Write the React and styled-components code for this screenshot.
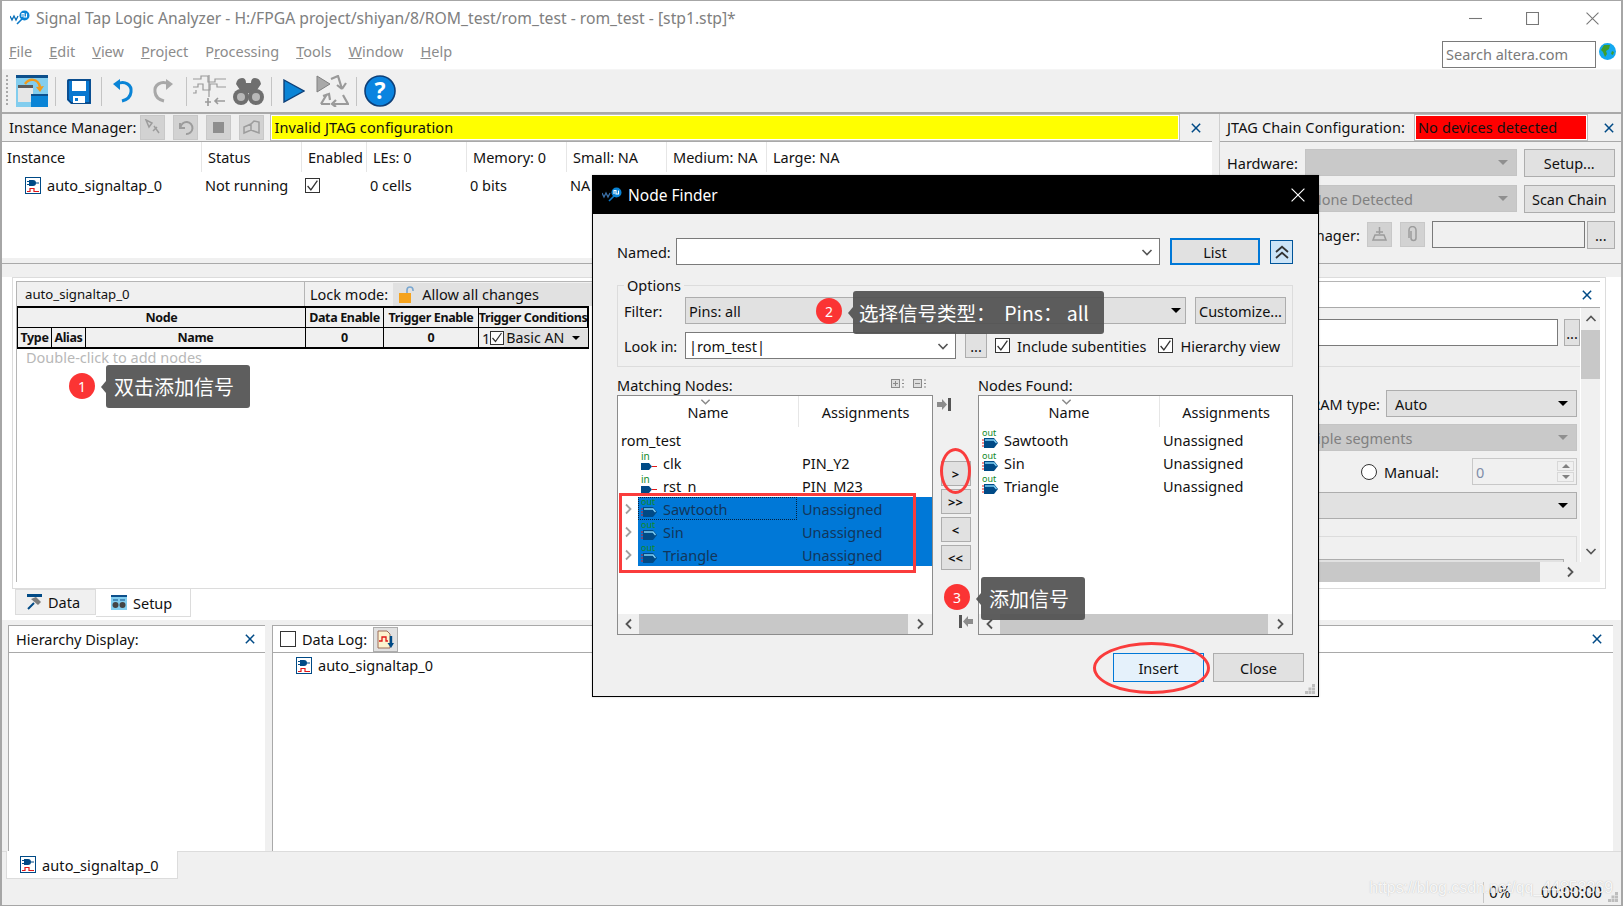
import React from 'react';
import styled, { createGlobalStyle } from 'styled-components';

const GlobalStyle = createGlobalStyle`
    html, body {
        margin: 0;
        padding: 0;
        overflow: hidden;
        background: #fff;
    }
    * { box-sizing: border-box; }
`

const Page = styled.div`
    position: relative;
    width: 1623px;
    height: 906px;
    display: flex;
    flex-direction: column;
    overflow: hidden;
    background: #f0f0f0;
    border: 1px solid #a6a6a6;
    border-width: 1px 2px 1px 2px;
    font-family: "Noto Sans", "Noto Sans CJK SC", sans-serif;
    font-size: 14.5px;
    color: #111;
`
const TitleBar = styled.div`
    height: 34px;
    flex: none;
    display: flex;
    align-items: center;
    background: #fff;
    color: #808080;
    font-size: 15.7px;
    padding-left: 8px;
    gap: 5px;
`
const WindowControls = styled.div`
    margin-left: auto;
    display: flex;
    align-items: center;
    gap: 44px;
    padding-right: 22px;
    & > svg:last-child { margin-left: 3px; }
`
const MenuBar = styled.div`
    height: 35px;
    flex: none;
    display: flex;
    align-items: center;
    background: #fff;
    border-bottom: 1px solid #f5f5f5;
    color: #8c8c8c;
    padding: 0 0 2px 7px;
    gap: 17px;
`
const SearchBox = styled.div`
    margin: 6px 0 0 auto;
    width: 154px;
    height: 27px;
    border: 1px solid #7a7a7a;
    color: #7a7a7a;
    padding-left: 3px;
    line-height: 25px;
`
const Globe = styled.div`
    width: 17px;
    height: 17px;
    margin: 0 5px 0 -14px;
    display: flex;
`
const Toolbar = styled.div`
    height: 42px;
    flex: none;
    display: flex;
    align-items: center;
    padding-left: 4px;
    background: #f0f0f0;
`
const Grip = styled.div`
    width: 2px;
    height: 32px;
    margin-right: 8px;
    background: repeating-linear-gradient(#aaa 0 2px, transparent 2px 4px);
`
const ToolSep = styled.div`
    width: 1px;
    height: 29px;
    background: #c4c4c4;
    margin: 0 ${p => p.$gap ?? 7}px;
`
const ToolIcon = styled.div`
    display: flex;
    margin: 0 ${p => p.$gap || 0}px;
`
const TopSplit = styled.div`
    height: 146px;
    flex: none;
    display: flex;
    border-top: 2px solid #a9a9a9;
`
const InstancePane = styled.div`
    width: 1210px;
    flex: none;
    display: flex;
    flex-direction: column;
`
const PaneBar = styled.div`
    height: 28px;
    flex: none;
    display: flex;
    align-items: center;
    background: #f0f0f0;
    border-bottom: 1px solid #a9a9a9;
    padding-left: 7px;
`
const BarButton = styled.div`
    width: 25px;
    height: 25px;
    margin-right: ${p => p.$after ?? 8}px;
    display: flex;
    align-items: center;
    justify-content: center;
    background: #d2d2d2;
    border: 1px solid #c8c8c8;
`
const BarLabel = styled.span`
    margin-right: 4px;
    position: relative;
    top: -1px;
`
const YellowStatus = styled.div`
    flex: 1;
    height: 25px;
    margin-left: -1px;
    padding-left: 2px;
    line-height: 22px;
    letter-spacing: 0.12px;
    background: #ffff00;
    border: 1px solid #fff;
    outline: 1px solid #bdbdbd;
`
const CloseSlot = styled.div`
    width: ${p => p.$width || 33}px;
    display: flex;
    justify-content: center;
    margin-left: auto;
`
const InstanceTable = styled.div`
    flex: 1;
    background: #fff;
    display: grid;
    grid-template-columns: 199px 100px 65px 100px 100px 100px 100px 1fr;
    grid-auto-rows: 30px 26px;
    align-content: start;
`
const InstHead = styled.div`
    display: flex;
    align-items: center;
    padding-left: ${p => p.$first ? 5 : 6}px;
    border-left: ${p => p.$first ? 'none' : '1px solid #e6e6e6'};
`
const InstCell = styled.div`
    display: flex;
    align-items: center;
    gap: 6px;
    padding-left: ${p => p.$indent ?? 4}px;
`
const Splitter = styled.div`
    width: 8px;
    flex: none;
    background: #f0f0f0;
    border-right: 1px solid #cfcfcf;
`
const JtagPane = styled.div`
    flex: 1;
    display: flex;
    flex-direction: column;
    background: #f0f0f0;
`
const JtagTitle = styled.span`
    position: relative;
    top: -1px;
    letter-spacing: 0.12px;
`
const RedStatus = styled.div`
    width: 172px;
    height: 25px;
    margin-left: 10px;
    padding-left: 2px;
    line-height: 22px;
    letter-spacing: 0.12px;
    background: #ff0000;
    border: 1px solid #fff;
    outline: 1px solid #bdbdbd;
    white-space: nowrap;
`
const JtagBody = styled.div`
    padding: 7px 11px 0 7px;
    display: flex;
    flex-direction: column;
    gap: 9px;
`
const JtagRow = styled.div`
    height: 27px;
    display: flex;
    align-items: center;
    justify-content: flex-end;
    gap: 7px;
`
const JtagLabel = styled.span`
    margin-right: auto;
    white-space: nowrap;
`
const Select = styled.div`
    width: ${p => p.$width ? `${p.$width}px` : 'auto'};
    flex: ${p => p.$width ? 'none' : 1};
    height: ${p => p.$height || 27}px;
    display: flex;
    align-items: center;
    padding: 0 ${p => p.$tight ? 4 : 8}px 0 ${p => p.$pad ?? 8}px;
    white-space: nowrap;
    overflow: hidden;
    background: ${p => p.$disabled ? '#c9c9c9' : '#e1e1e1'};
    color: ${p => p.$disabled ? '#808080' : '#111'};
    border: 1px solid ${p => p.$disabled ? '#c4c4c4' : '#adadad'};
`
const Caret = styled.span`
    margin-left: auto;
    flex: none;
    width: 0;
    height: 0;
    border-left: ${p => p.$small ? 4 : 5}px solid transparent;
    border-right: ${p => p.$small ? 4 : 5}px solid transparent;
    border-top: ${p => p.$small ? 4 : 5}px solid ${p => p.$disabled ? '#8f8f8f' : '#000'};
`
const Button = styled.div`
    width: ${p => p.$width || 91}px;
    height: ${p => p.$height || 28}px;
    flex: none;
    display: flex;
    align-items: center;
    justify-content: center;
    margin: 0 ${p => p.$right || 0}px 0 ${p => p.$left || 0}px;
    background: ${p => p.$primary ? '#e5f1fb' : '#e1e1e1'};
    border: ${p => p.$focus ? 2 : 1}px solid ${p => (p.$primary || p.$focus) ? '#0078d7' : '#adadad'};
    white-space: nowrap;
`
const Band = styled.div`
    height: 6px;
    flex: none;
    background: #f0f0f0;
    border-bottom: 1px solid #a9a9a9;
`
const MainArea = styled.div`
    height: 356px;
    flex: none;
    display: flex;
    flex-direction: column;
    background: #fff;
    padding-top: 13px;
    box-shadow: inset 0 13px 0 #f0f0f0;
`
const Frame = styled.div`
    height: 312px;
    flex: none;
    width: 1594px;
    margin-left: 10px;
    display: flex;
    padding: 3px 5px 0 3px;
    border: 1px solid #dcdcdc;
    background: #fff;
`
const NodePane = styled.div`
    width: 578px;
    flex: none;
    border-left: 1px solid #b5b5b5;
    border-top: 1px solid #b5b5b5;
    margin-bottom: 6px;
    display: flex;
    flex-direction: column;
`
const LockRow = styled.div`
    height: 24px;
    flex: none;
    display: flex;
    align-items: center;
    background: #f0f0f0;
    font-size: 14.5px;
`
const InstanceName = styled.div`
    width: 288px;
    flex: none;
    height: 100%;
    display: flex;
    align-items: center;
    padding-left: 8px;
    border-right: 1px solid #b5b5b5;
    font-size: 13.2px;
`
const LockLabel = styled.span`
    padding: 0 5px;
`
const LockSelect = styled.div`
    flex: 1;
    height: 23px;
    display: flex;
    align-items: center;
    gap: 6px;
    padding-left: 6px;
    background: #e1e1e1;
`
const NodeGrid = styled.div`
    display: grid;
    grid-template-columns: 34px 34px 220px 78px 95px 109px;
    grid-auto-rows: 20px;
    width: 572px;
    border: 1px solid #000;
    border-width: 2px 1px 1px 1px;
    background: #f0f0f0;
`
const NodeHead = styled.div`
    grid-column: span ${p => p.$span || 1};
    display: flex;
    align-items: center;
    justify-content: center;
    overflow: hidden;
    white-space: nowrap;
    font-size: 12.5px;
    font-weight: 700;
    letter-spacing: -0.35px;
    border-right: 1px solid #000;
    border-bottom: 1px solid #000;
`
const ConditionCell = styled.div`
    display: flex;
    align-items: center;
    padding-left: 3px;
    font-size: 14.5px;
    border-bottom: 1px solid #000;
`
const ConditionSelect = styled.div`
    flex: 1;
    height: 18px;
    display: flex;
    align-items: center;
    gap: 0;
    padding: 0 8px 0 2px;
    background: #e1e1e1;
    font-size: 14.2px;
`
const Hint = styled.div`
    padding: 0 0 0 9px;
    line-height: 17px;
    color: #b8b8b8;
`
const SettingsPane = styled.div`
    flex: 1;
    min-width: 0;
    display: flex;
    flex-direction: column;
    border-top: 1px solid #b5b5b5;
    margin-bottom: 6px;
`
const SettingsHead = styled.div`
    height: 26px;
    flex: none;
    display: flex;
    align-items: center;
    padding-right: 0;
    background: #fff;
    border-bottom: 1px solid #a9a9a9;
`
const SettingsBody = styled.div`
    flex: 1;
    min-height: 0;
    display: flex;
    background: #f0f0f0;
`
const SettingsForm = styled.div`
    flex: 1;
    overflow: hidden;
    padding: 11px 3px 0 0;
    display: flex;
    flex-direction: column;
    border-right: 1px solid #fff;
`
const FormRow = styled.div`
    flex: none;
    height: ${p => p.$height || 27}px;
    margin-top: ${p => p.$top || 0}px;
    margin-right: ${p => p.$right || 0}px;
    display: flex;
    align-items: center;
    justify-content: flex-end;
    gap: ${p => p.$gap || 6}px;
`
const FormInput = styled.div`
    width: ${p => p.$width || 300}px;
    height: 27px;
    margin-left: ${p => p.$left || 0}px;
    margin-right: ${p => p.$after || 0}px;
    background: ${p => p.$muted ? '#f0f0f0' : '#fff'};
    border: 1px solid #7a7a7a;
`
const Rule = styled.div`
    flex: none;
    height: 1px;
    margin: 20px -3px 0 0;
    background: #dcdcdc;
`
const Radio = styled.span`
    width: 16px;
    height: 16px;
    border: 1px solid #333;
    border-radius: 50%;
    background: #fff;
`
const Spin = styled.div`
    width: 105px;
    height: 27px;
    margin-left: 26px;
    display: flex;
    align-items: center;
    justify-content: space-between;
    padding: 0 2px 0 3px;
    color: #7f8da8;
    border: 1px solid #c8c8c8;
`
const SpinArrows = styled.div`
    display: flex;
    flex-direction: column;
    gap: 1px;
    width: 17px;
`
const SpinArrow = styled.div`
    height: 10px;
    display: flex;
    align-items: center;
    justify-content: center;
    background: #f0f0f0;
    border: 1px solid #d8d8d8;
    &::after {
        content: '';
        width: 0;
        height: 0;
        border-left: 4px solid transparent;
        border-right: 4px solid transparent;
        ${p => p.$up ? 'border-bottom: 4px solid #808080;' : 'border-top: 4px solid #808080;'}
    }
`
const GroupBox = styled.div`
    flex: none;
    height: 60px;
    margin-top: 17px;
    padding: 22px 12px 0 0;
    border: 1px solid #dcdcdc;
`
const GroupField = styled.div`
    height: 30px;
    background: #e1e1e1;
    border: 1px solid #adadad;
`
const VScroll = styled.div`
    width: 19px;
    flex: none;
    display: flex;
    flex-direction: column;
    align-items: center;
    background: #f0f0f0;
`
const VThumb = styled.div`
    width: 100%;
    height: 49px;
    background: #c8c8c8;
    margin-bottom: auto;
`
const ArrowSlot = styled.div`
    height: ${p => p.$size || 22}px;
    width: ${p => p.$size || 22}px;
    flex: none;
    display: flex;
    align-items: center;
    justify-content: center;
`
const HScrollBar = styled.div`
    height: ${p => p.$height || 20}px;
    flex: none;
    display: flex;
    align-items: center;
    background: #f0f0f0;
`
const HThumb = styled.div`
    flex: ${p => p.$grow || 1};
    height: 100%;
    background: #c8c8c8;
`
const HTrack = styled.div`
    width: ${p => p.$width}px;
    height: 100%;
    display: flex;
    align-items: center;
    justify-content: center;
    padding-left: 0;
`
const TabRow = styled.div`
    height: 28px;
    flex: none;
    display: flex;
    padding-left: 13px;
    align-items: flex-start;
`
const Tab = styled.div`
    height: ${p => p.$active ? 28 : 26}px;
    width: ${p => p.$width}px;
    display: flex;
    align-items: center;
    gap: 6px;
    padding-left: ${p => p.$pad}px;
    background: ${p => p.$active ? '#fff' : '#f0f0f0'};
    border: 1px solid #dcdcdc;
    border-top: ${p => p.$active ? 'none' : '1px solid #dcdcdc'};
    border-left: ${p => p.$active ? 'none' : '1px solid #dcdcdc'};
`
const BottomSplit = styled.div`
    flex: 1;
    min-height: 0;
    display: flex;
    padding: 5px 8px 0 6px;
    background: #f0f0f0;
`
const LogPane = styled.div`
    width: ${p => p.$width ? `${p.$width}px` : 'auto'};
    flex: ${p => p.$width ? 'none' : 1};
    margin-left: ${p => p.$gap || 0}px;
    display: flex;
    flex-direction: column;
    background: #fff;
    border-top: 1px solid #a9a9a9;
    border-left: 1px solid #a9a9a9;
`
const LogBar = styled.div`
    height: 27px;
    flex: none;
    display: flex;
    align-items: center;
    gap: 6px;
    padding-left: 7px;
    border-bottom: 1px solid #a9a9a9;
`
const Check = styled.span`
    width: ${p => p.$size || 15}px;
    height: ${p => p.$size || 15}px;
    flex: none;
    display: flex;
    align-items: center;
    justify-content: center;
    background: #fff;
    border: 1px solid #333;
`
const LogIconButton = styled.div`
    width: 25px;
    height: 25px;
    display: flex;
    align-items: center;
    justify-content: center;
    background: #e1e1e1;
    border: 1px solid #adadad;
`
const LogRow = styled.div`
    display: flex;
    align-items: center;
    gap: 6px;
    padding: 2px 0 0 23px;
`
const FootTabs = styled.div`
    height: 28px;
    flex: none;
    display: flex;
    border-top: 1px solid #dcdcdc;
    background: #f0f0f0;
`
const FootTab = styled.div`
    width: 172px;
    margin-left: 4px;
    margin-top: -1px;
    display: flex;
    align-items: center;
    gap: 6px;
    padding-left: 13px;
    background: #fff;
    border: 1px solid #dcdcdc;
    border-top: none;
    letter-spacing: 0.1px;
`
const StatusBar = styled.div`
    height: 26px;
    flex: none;
    display: flex;
    align-items: center;
    justify-content: flex-end;
    padding-right: 18px;
    background: #f0f0f0;
    font-size: 15.4px;
`
const StatusCell = styled.span`
    width: ${p => p.$width}px;
    padding-left: ${p => p.$pad || 0}px;
    border-left: ${p => p.$line ? '1px solid #c8c8c8' : 'none'};
`
const Watermark = styled.div`
    position: absolute;
    right: 8px;
    bottom: 8px;
    font-family: "Liberation Sans", sans-serif;
    font-size: 15.9px;
    color: rgba(255, 255, 255, 0.9);
    text-shadow: 0 0 1px rgba(120, 120, 120, 0.5);
    white-space: nowrap;
`
const Grabber = styled.div`
    position: absolute;
    right: ${p => p.$right}px;
    bottom: ${p => p.$bottom}px;
    display: flex;
`

/* Node Finder dialog */
const Dialog = styled.div`
    position: absolute;
    left: 590px;
    top: 174px;
    width: 727px;
    height: 522px;
    display: flex;
    flex-direction: column;
    background: #f0f0f0;
    border: 1px solid #000;
    box-shadow: 0 0 2px rgba(0, 0, 0, 0.2);
`
const DialogTitle = styled.div`
    height: 38px;
    flex: none;
    display: flex;
    align-items: center;
    gap: 5px;
    padding: 0 13px 0 9px;
    background: #000;
    color: #fff;
    font-size: 15.5px;
`
const DialogClose = styled.div`
    margin-left: auto;
    display: flex;
`
const DialogBody = styled.div`
    flex: 1;
    padding: 24px 25px 0 24px;
    display: flex;
    flex-direction: column;
`
const NamedRow = styled.div`
    height: 27px;
    flex: none;
    display: flex;
    align-items: center;
`
const DialogLabel = styled.span`
    width: ${p => p.$width}px;
    flex: none;
`
const ComboInput = styled.div`
    width: ${p => p.$width}px;
    height: 27px;
    flex: none;
    display: flex;
    align-items: center;
    padding: 0 6px 0 ${p => p.$pad ?? 5}px;
    background: #fff;
    border: 1px solid #7a7a7a;
`
const EndMark = styled.span`
    margin-left: auto;
    display: flex;
`
const Collapse = styled.div`
    width: 24px;
    height: 24px;
    margin-left: 10px;
    display: flex;
    align-items: center;
    justify-content: center;
    background: #cce4f7;
    border: 1px solid #005499;
`
const Options = styled.fieldset`
    margin: 10px 0 0;
    height: 92px;
    padding: 0 6px;
    border: 1px solid #dcdcdc;
    flex: none;
    display: flex;
    flex-direction: column;
    gap: 8px;
    min-width: 0;
`
const Legend = styled.legend`
    margin-left: 0;
    padding: 0 3px;
    line-height: 20px;
`
const OptionRow = styled.div`
    height: 27px;
    flex: none;
    display: flex;
    align-items: center;
    gap: ${p => p.$gap || 0}px;
    margin-top: ${p => p.$top || 0}px;
`
const CheckLabel = styled.label`
    display: flex;
    align-items: center;
    gap: 7px;
    white-space: nowrap;
    margin-left: ${p => p.$left || 0}px;
`
const NodeColumns = styled.div`
    margin-top: 7px;
    display: grid;
    grid-template-columns: 316px 45px 315px;
`
const NodesHead = styled.div`
    height: 21px;
    display: flex;
    align-items: center;
    gap: 7px;
`
const NodesHeadIcons = styled.div`
    margin: 0 7px 0 auto;
    display: flex;
    gap: 9px;
`
const NodesBox = styled.div`
    height: 240px;
    display: flex;
    flex-direction: column;
    background: #fff;
    border: 1px solid #8c8c8c;
`
const BoxHead = styled.div`
    height: 31px;
    flex: none;
    display: grid;
    grid-template-columns: ${p => p.$nameWidth}px 1fr;
    position: relative;
`
const BoxHeadCell = styled.div`
    display: flex;
    align-items: center;
    justify-content: center;
    border-left: ${p => p.$line ? '1px solid #e6e6e6' : 'none'};
`
const SortMark = styled.div`
    position: absolute;
    top: 0;
    left: ${p => p.$left}px;
    display: flex;
`
const TreeList = styled.div`
    flex: 1;
    min-height: 0;
    padding-top: 1px;
`
const TreeRow = styled.div`
    height: 23px;
    display: flex;
    align-items: center;
    color: ${p => p.$selected ? '#12365c' : '#111'};
`
const Expander = styled.div`
    width: 20px;
    flex: none;
    display: flex;
    justify-content: center;
`
const RowBody = styled.div`
    flex: 1;
    height: 100%;
    display: grid;
    grid-template-columns: ${p => p.$nameWidth}px 1fr;
    grid-template-rows: 23px;
    background: ${p => p.$selected ? '#0078d7' : 'transparent'};
`
const NameCell = styled.div`
    display: flex;
    align-items: center;
    padding-left: ${p => p.$pad || 3}px;
    gap: 3px;
    outline: ${p => p.$focus ? '1px dotted #06213d' : 'none'};
    outline-offset: -1px;
`
const AssignCell = styled.div`
    display: flex;
    align-items: center;
    padding-left: 5px;
`
const MoveButtons = styled.div`
    display: flex;
    flex-direction: column;
    align-items: center;
    position: relative;
    padding-top: 87px;
    gap: 3px;
    height: 261px;
`
const MoveButton = styled.div`
    width: 30px;
    height: 25px;
    display: flex;
    align-items: center;
    justify-content: center;
    background: #e1e1e1;
    border: 1px solid #adadad;
    font-weight: 700;
    font-size: 13px;
`
const MoveIcon = styled.div`
    position: absolute;
    left: ${p => p.$left}px;
    top: ${p => p.$top}px;
    display: flex;
`
const DialogFoot = styled.div`
    margin-top: 18px;
    display: flex;
    justify-content: flex-end;
    gap: 9px;
    margin-right: -11px;
`

/* red marks and grey notes someone drew on top of the screenshot */
const RedBox = styled.div`
    position: absolute;
    left: ${p => p.$left}px;
    top: ${p => p.$top}px;
    width: ${p => p.$width}px;
    height: ${p => p.$height}px;
    border: 3px solid #fa3c3c;
    border-radius: ${p => p.$round ? '50%' : '0'};
    pointer-events: none;
`
const Note = styled.div`
    position: absolute;
    left: ${p => p.$left}px;
    top: ${p => p.$top}px;
    height: ${p => p.$height}px;
    width: ${p => p.$width}px;
    padding-left: ${p => p.$pad ?? 8}px;
    display: flex;
    align-items: center;
    white-space: pre;
    border-radius: 3px;
    background: rgba(82, 82, 82, 0.93);
    color: #fff;
    font-family: "Noto Sans CJK SC", "Noto Sans", sans-serif;
    font-size: ${p => p.$size || 20}px;
    &::before {
        content: '';
        position: absolute;
        left: -5px;
        top: 50%;
        margin-top: -6px;
        border-top: 6px solid transparent;
        border-bottom: 6px solid transparent;
        border-right: 5px solid rgba(82, 82, 82, 0.93);
    }
`
const NoteDot = styled.div`
    position: absolute;
    left: ${p => p.$left}px;
    top: ${p => p.$top}px;
    width: 26px;
    height: 26px;
    display: flex;
    align-items: center;
    justify-content: center;
    border-radius: 50%;
    background: #fb3434;
    color: #fff;
    font-size: 14px;
`

const Stroke = ({ size = 12, color = '#555', width = 1.6, d }) => (
    <svg width={size} height={size} viewBox="0 0 12 12" fill="none" stroke={color} strokeWidth={width}>
        <path d={d} />
    </svg>
)
const CloseX = ({ color = '#004a86' }) => <Stroke size={10} color={color} width={1.8} d="M1 1 L11 11 M11 1 L1 11" />
const ChevronLeft = () => <Stroke d="M8 1.5 L3.5 6 L8 10.5" width={1.8} />
const ChevronRight = ({ color }) => <Stroke color={color} d="M4 1.5 L8.5 6 L4 10.5" width={1.8} />
const ChevronUp = () => <Stroke d="M1.5 8 L6 3.5 L10.5 8" width={1.6} />
const ChevronDown = ({ size = 12, color = '#555' }) => <Stroke size={size} color={color} d="M1.5 4 L6 8.5 L10.5 4" width={1.6} />
const Tick = () => <Stroke size={13} color="#333" width={1.2} d="M1.5 6.5 L4.5 10 L10.5 1.5" />

const WaveLogo = ({ light }) => (
    <svg width="21" height="16" viewBox="0 0 21 16" fill="none">
        <path d="M0 6 L2 10 L4 6 L6 10 L8 6" stroke={light ? '#0a6fb8' : '#3a6ea5'} strokeWidth="1.3" />
        <path d="M7 14 L14 7" stroke="#0a78c8" strokeWidth="1.6" />
        <circle cx="14.5" cy="5.5" r="5" fill="#0a84d6" />
        <path d="M12 7 V3.5 H14 V7 H16.5 V3.5" stroke="#fff" strokeWidth="1.1" />
    </svg>
)
const InstanceIcon = () => (
    <svg width="16" height="17" viewBox="0 0 16 17" fill="none">
        <rect x="0.5" y="0.5" width="15" height="16" fill="#fff" stroke="#004a86" />
        <path d="M4 3 H8 A3 3 0 0 1 8 9 H4 Z" fill="#004a86" />
        <path d="M2 4.5 H4 M2 7.5 H4 M11 6 H14" stroke="#004a86" />
        <path d="M2 14.5 H5 V11.5 H9 V14.5 H14" stroke="#e01818" strokeWidth="1.2" />
    </svg>
)
const AppIcon = () => (
    <svg width="32" height="32" viewBox="0 0 32 32">
        <rect width="32" height="32" fill="#82cdee" />
        <rect width="32" height="3" fill="#0d4f8b" />
        <rect x="2" y="10" width="15" height="17" fill="#e6e6e6" />
        <rect x="2" y="10" width="15" height="3" fill="#5a5a5a" />
        <rect x="15" y="19" width="17" height="13" fill="#0a84d6" />
        <rect x="15" y="19" width="17" height="2" fill="#0d4f8b" />
        <path d="M9 9 C13 3 22 3 24 12" stroke="#f09a1a" strokeWidth="2.4" fill="none" />
        <path d="M20 12 L28 11 L24 17 Z" fill="#f09a1a" />
    </svg>
)
const SaveIcon = () => (
    <svg width="24" height="25" viewBox="0 0 24 25">
        <path d="M0 2 Q0 0 2 0 H24 V25 H4 L0 21 Z" fill="#0a78d0" />
        <path d="M1 2 Q1 1 2 1 H23 V24 H4.5 L1 20.5 Z" fill="none" stroke="#0d3f78" strokeWidth="1.4" />
        <rect x="5" y="2" width="14" height="10" fill="#fff" />
        <rect x="6" y="17" width="12" height="7" fill="#fff" />
        <rect x="8" y="19" width="3" height="3" fill="#0a78d0" />
    </svg>
)
const UndoIcon = ({ color, flip }) => (
    <svg width="21" height="24" viewBox="0 0 21 24" fill="none" style={flip ? { transform: 'scaleX(-1)' } : undefined}>
        <path d="M4 5 C12 1 19 6 18 13 C17.5 18 13 21 9 22" stroke={color} strokeWidth="3" />
        <path d="M7 0 L0 5 L7 11 Z" fill={color} />
    </svg>
)
const WaveToolIcon = () => (
    <svg width="33" height="32" viewBox="0 0 33 32" fill="none" stroke="#9a9a9a" strokeWidth="1.2">
        <path d="M0 4 H8 V1 H15 V7 H22 V4 H33" />
        <path d="M0 12 H5 V9 H10 V15 H17 V9 H24 V12 H33" />
        <path d="M0 18 H3 V15 M16 0 V22" />
        <path d="M15 23 V31 M12 27 H18 M32 26 H22 M25 23 L22 26 L25 29" strokeWidth="1.6" />
    </svg>
)
const BinocularsIcon = () => (
    <svg width="31" height="30" viewBox="0 0 31 30">
        <path d="M3 8 Q4 2 9 2 Q13 2 13 7 H18 Q18 2 22 2 Q27 2 28 8 L24 14 H7 Z" fill="#6f6f6f" />
        <rect x="12" y="9" width="7" height="8" fill="#6f6f6f" />
        <circle cx="8" cy="21" r="8" fill="#6f6f6f" />
        <circle cx="23" cy="21" r="8" fill="#6f6f6f" />
        <circle cx="8" cy="21" r="4" fill="#b8b8b8" />
        <circle cx="23" cy="21" r="4" fill="#b8b8b8" />
    </svg>
)
const PlayIcon = () => (
    <svg width="22" height="24" viewBox="0 0 22 24">
        <path d="M1 1 L21 12 L1 23 Z" fill="#0a84d6" stroke="#0d3f78" strokeWidth="1.4" />
    </svg>
)
const AutoRunIcon = () => (
    <svg width="33" height="32" viewBox="0 0 33 32" fill="none">
        <path d="M1 1 L14 9 L1 17 Z" fill="#a8a8a8" stroke="#808080" />
        <path d="M15 4 L22 1 L26 14 M26 14 L30 8 M26 14 L21 10" stroke="#9a9a9a" strokeWidth="2.2" />
        <path d="M5 29 L11 19 M7 21 L13 19 L14 25 M5 29 H14" stroke="#9a9a9a" strokeWidth="2.2" />
        <path d="M18 29 H32 L27 20 M20 25 L16 29 L20 32" stroke="#9a9a9a" strokeWidth="2.2" />
    </svg>
)
const HelpIcon = () => (
    <svg width="32" height="32" viewBox="0 0 32 32">
        <circle cx="16" cy="16" r="15" fill="#0a84e0" stroke="#0d3f78" strokeWidth="1.6" />
        <text x="16" y="24" textAnchor="middle" fontSize="23" fontWeight="700" fontFamily="Noto Sans, sans-serif" fill="#fff">?</text>
    </svg>
)
const GlobeIcon = () => (
    <svg width="17" height="17" viewBox="0 0 17 17">
        <circle cx="8.5" cy="8.5" r="8.5" fill="#14a8f0" />
        <path d="M5 2 L11 2 L10 6 L7 8 L8 11 L6 14 L4 9 L2 7 Z" fill="#3f9e2c" />
        <path d="M13 8 L15 9 L14 12 L12 11 Z" fill="#3f9e2c" />
    </svg>
)
const ManagerGlyph = ({ kind }) => (
    <svg width="17" height="17" viewBox="0 0 17 17" fill="none" stroke="#9c9c9c" strokeWidth="1.5">
        {kind === 'wand' && <path d="M2 1 L8 4 L5 8 Z M10 7 L15 14 M9 12 L13 8" />}
        {kind === 'reset' && <path d="M3 4 V9 H8 M3.5 8.5 A6 6 0 1 1 9 15" strokeWidth="2" />}
        {kind === 'stop' && <rect x="3" y="3" width="11" height="11" fill="#8e8e8e" stroke="none" />}
        {kind === 'book' && <path d="M1 14 L8 11 L16 14 V3 L11 2 L8 5 L1 8 Z M8 5 V11" />}
        {kind === 'program' && <path d="M8.5 1 V8 M5 6 H12 M4 9 H13 L15 14 H2 Z" />}
        {kind === 'clip' && <path d="M6 5 V12 A2.5 2.5 0 0 0 11 12 V4 A3.5 3.5 0 0 0 4 4 V12" transform="translate(1)" />}
    </svg>
)
const LockIcon = () => (
    <svg width="17" height="17" viewBox="0 0 17 17" fill="none">
        <path d="M8 7 V4 A3 3 0 0 1 14 4 V5" stroke="#7aa7d0" strokeWidth="1.6" />
        <rect x="0" y="7" width="12" height="10" fill="#f5a31e" />
    </svg>
)
const HammerIcon = () => (
    <svg width="15" height="16" viewBox="0 0 15 16" fill="none">
        <rect width="15" height="3" fill="#004a86" />
        <rect y="3" width="15" height="8" fill="#eee" />
        <path d="M1 15 L7 9" stroke="#004a86" strokeWidth="2" />
        <path d="M4 5 L9 3 L14 8 L11 11 Z" fill="#7c7c7c" />
    </svg>
)
const SetupIcon = () => (
    <svg width="16" height="15" viewBox="0 0 16 15">
        <rect width="16" height="15" fill="#82cdee" />
        <rect width="16" height="2" fill="#0d4f8b" />
        <circle cx="4.5" cy="10" r="3" fill="#444" />
        <circle cx="11.5" cy="10" r="3" fill="#444" />
        <path d="M2 5 H7 M9 5 H14" stroke="#0d4f8b" />
    </svg>
)
const LogIcon = () => (
    <svg width="17" height="19" viewBox="0 0 17 19" fill="none">
        <path d="M1 1 H10 L13 4 V18 H1 Z" fill="#fdf3cf" stroke="#9c6c58" />
        <path d="M2 11 H5 V7 H9 V11 H11" stroke="#e01818" strokeWidth="1.3" />
        <path d="M14 6 V15" stroke="#004a86" strokeWidth="2.4" />
        <path d="M10.5 13 H17 L14 18 Z" fill="#004a86" />
    </svg>
)
const PinBox = styled.svg`
    width: 19px;
    height: 29px;
    margin: -3px 0;
    flex: none;
`
const PinIcon = ({ dir }) => dir === 'in' ? (
    <PinBox viewBox="0 0 19 29" fill="none">
        <text x="0" y="12" fontSize="10" fontFamily="Noto Sans, sans-serif" fill="#128a2a">in</text>
        <path d="M0 15 H8 L11 18.5 L8 22 H0 Z" fill="#004a86" />
        <path d="M11 18.5 H16" stroke="#e01818" />
    </PinBox>
) : (
    <PinBox viewBox="0 0 19 29" fill="none">
        <text x="0" y="11" fontSize="9" fontFamily="Noto Sans, sans-serif" fill="#128a2a">out</text>
        <path d="M2 13 H12 L16 18 L12 23 H2 Z" fill="#004a86" />
        <path d="M3 15 H12 L14.5 18" stroke="#7fd0f5" strokeWidth="1.3" />
        <path d="M0 15 H2 M0 18 H2 M0 21 H2" stroke="#e01818" />
    </PinBox>
)
const HierarchyIcon = ({ plus }) => (
    <svg width="13" height="11" viewBox="0 0 13 11" fill="none" stroke="#8a8a8a">
        <rect x="0.5" y="0.5" width="8" height="8" fill="#ddd" />
        <path d={plus ? 'M2 4.5 H7 M4.5 2 V7' : 'M2 4.5 H7'} />
        <path d="M11 1 H13 M11 4.5 H13 M11 8 H13" />
    </svg>
)
const ToEndIcon = ({ flip }) => (
    <svg width="14" height="13" viewBox="0 0 14 13" style={flip ? { transform: 'scaleX(-1)' } : undefined}>
        <path d="M0 4 H5 V1 L10 6.5 L5 12 V9 H0 Z" fill="#8c8c8c" />
        <rect x="11" y="0" width="3" height="13" fill="#555" />
    </svg>
)
const Grip3 = () => (
    <svg width="10" height="10" viewBox="0 0 10 10" fill="#bdbdbd">
        <rect x="7" y="0" width="3" height="3" />
        <rect x="3.5" y="3.5" width="3" height="3" />
        <rect x="7" y="3.5" width="3" height="3" />
        <rect x="0" y="7" width="3" height="3" />
        <rect x="3.5" y="7" width="3" height="3" />
        <rect x="7" y="7" width="3" height="3" />
    </svg>
)

const matching = [
    { name: 'Sawtooth', focus: true },
    { name: 'Sin' },
    { name: 'Triangle' },
]

const Scrollbar = ({ width }) => (
    <HScrollBar>
        <ArrowSlot $size={21}><ChevronLeft /></ArrowSlot>
        <HThumb />
        <ArrowSlot $size={width}><ChevronRight /></ArrowSlot>
    </HScrollBar>
)

const NodeFinder = () => (
    <Dialog>
        <DialogTitle>
            <WaveLogo />
            Node Finder
            <DialogClose><Stroke size={14} color="#fff" width={1} d="M0.5 0.5 L11.5 11.5 M11.5 0.5 L0.5 11.5" /></DialogClose>
        </DialogTitle>
        <DialogBody>
            <NamedRow>
                <DialogLabel $width={59}>Named:</DialogLabel>
                <ComboInput $width={484}><EndMark><ChevronDown /></EndMark></ComboInput>
                <Button $focus $height={27} $width={90} $left={10}>List</Button>
                <Collapse><Stroke size={18} color="#333" width={1.2} d="M2 6 L6 2.5 L10 6 M2 10 L6 6.5 L10 10" /></Collapse>
            </NamedRow>
            <Options>
                <Legend>Options</Legend>
                <OptionRow $top={2}>
                    <DialogLabel $width={61}>Filter:</DialogLabel>
                    <Select $tight $pad={3} $width={501}>Pins: all<Caret /></Select>
                    <Button $width={91} $height={27} $left={9}>Customize...</Button>
                </OptionRow>
                <OptionRow>
                    <DialogLabel $width={61}>Look in:</DialogLabel>
                    <ComboInput $width={271} $pad={3}>|rom_test|<EndMark><ChevronDown /></EndMark></ComboInput>
                    <Button $width={22} $height={25} $left={9} $right={8}>...</Button>
                    <CheckLabel><Check><Tick /></Check>Include subentities</CheckLabel>
                    <CheckLabel $left={12}><Check><Tick /></Check>Hierarchy view</CheckLabel>
                </OptionRow>
            </Options>
            <NodeColumns>
                <div>
                    <NodesHead>
                        Matching Nodes:
                        <NodesHeadIcons><HierarchyIcon plus /><HierarchyIcon /></NodesHeadIcons>
                    </NodesHead>
                    <NodesBox>
                        <BoxHead $nameWidth={180}>
                            <SortMark $left={82}><ChevronDown size={11} color="#888" /></SortMark>
                            <BoxHeadCell>Name</BoxHeadCell>
                            <BoxHeadCell $line>Assignments</BoxHeadCell>
                        </BoxHead>
                        <TreeList>
                            <TreeRow><RowBody $nameWidth={179}><NameCell>rom_test</NameCell></RowBody></TreeRow>
                            <TreeRow><RowBody $nameWidth={179}><NameCell $pad={23}><PinIcon dir="in" />clk</NameCell><AssignCell>PIN_Y2</AssignCell></RowBody></TreeRow>
                            <TreeRow><RowBody $nameWidth={179}><NameCell $pad={23}><PinIcon dir="in" />rst_n</NameCell><AssignCell>PIN_M23</AssignCell></RowBody></TreeRow>
                            {matching.map(row => (
                                <TreeRow $selected key={row.name}>
                                    <Expander><ChevronRight color="#a0a0a0" /></Expander>
                                    <RowBody $selected $nameWidth={159}>
                                        <NameCell $pad={3} $focus={row.focus}><PinIcon />{row.name}</NameCell>
                                        <AssignCell>Unassigned</AssignCell>
                                    </RowBody>
                                </TreeRow>
                            ))}
                        </TreeList>
                        <Scrollbar width={24} />
                    </NodesBox>
                </div>
                <MoveButtons>
                    <MoveIcon $left={4} $top={24}><ToEndIcon /></MoveIcon>
                    <MoveButton>&gt;</MoveButton>
                    <MoveButton>&gt;&gt;</MoveButton>
                    <MoveButton>&lt;</MoveButton>
                    <MoveButton>&lt;&lt;</MoveButton>
                    <MoveIcon $left={26} $top={241}><ToEndIcon flip /></MoveIcon>
                </MoveButtons>
                <div>
                    <NodesHead>Nodes Found:</NodesHead>
                    <NodesBox>
                        <BoxHead $nameWidth={180}>
                            <SortMark $left={82}><ChevronDown size={11} color="#888" /></SortMark>
                            <BoxHeadCell>Name</BoxHeadCell>
                            <BoxHeadCell $line>Assignments</BoxHeadCell>
                        </BoxHead>
                        <TreeList>
                            {matching.map(row => (
                                <TreeRow key={row.name}>
                                    <RowBody $nameWidth={179}>
                                        <NameCell $pad={3}><PinIcon />{row.name}</NameCell>
                                        <AssignCell>Unassigned</AssignCell>
                                    </RowBody>
                                </TreeRow>
                            ))}
                        </TreeList>
                        <Scrollbar width={24} />
                    </NodesBox>
                </div>
            </NodeColumns>
            <DialogFoot>
                <Button $primary $width={91} $height={29}>Insert</Button>
                <Button $width={91} $height={29}>Close</Button>
            </DialogFoot>
        </DialogBody>
        <Grabber $right={3} $bottom={2}><Grip3 /></Grabber>

        <RedBox $left={26} $top={317} $width={297} $height={80} />
        <RedBox $round $left={347} $top={272} $width={31} $height={46} />
        <RedBox $round $left={500} $top={466} $width={117} $height={52} />

        <NoteDot $left={223} $top={122}>2</NoteDot>
        <Note $left={260} $top={115} $width={251} $height={43} $size={19.5} $pad={6}>选择信号类型：  Pins： all</Note>
        <NoteDot $left={351} $top={408}>3</NoteDot>
        <Note $left={388} $top={401} $width={104} $height={43}>添加信号</Note>
    </Dialog>
)

const App = () => (
    <Page>
        <GlobalStyle />
        <TitleBar>
            <WaveLogo light />
            Signal Tap Logic Analyzer - H:/FPGA project/shiyan/8/ROM_test/rom_test - rom_test - [stp1.stp]*
            <WindowControls>
                <Stroke size={13} color="#777" width={1} d="M0 6 H12" />
                <Stroke size={13} color="#777" width={1} d="M0.5 0.5 H11.5 V11.5 H0.5 Z" />
                <Stroke size={13} color="#777" width={1} d="M0.5 0.5 L11.5 11.5 M11.5 0.5 L0.5 11.5" />
            </WindowControls>
        </TitleBar>
        <MenuBar>
            <span><u>F</u>ile</span>
            <span><u>E</u>dit</span>
            <span><u>V</u>iew</span>
            <span><u>P</u>roject</span>
            <span>P<u>r</u>ocessing</span>
            <span><u>T</u>ools</span>
            <span><u>W</u>indow</span>
            <span><u>H</u>elp</span>
            <SearchBox>Search altera.com</SearchBox>
            <Globe><GlobeIcon /></Globe>
        </MenuBar>
        <Toolbar>
            <Grip />
            <ToolIcon><AppIcon /></ToolIcon>
            <ToolSep />
            <ToolIcon $gap={4}><SaveIcon /></ToolIcon>
            <ToolSep $gap={6} />
            <ToolIcon $gap={5}><UndoIcon color="#0a84d6" /></ToolIcon>
            <ToolIcon $gap={13}><UndoIcon color="#a8a8a8" flip /></ToolIcon>
            <ToolSep $gap={0} />
            <ToolIcon $gap={6}><WaveToolIcon /></ToolIcon>
            <ToolIcon $gap={1}><BinocularsIcon /></ToolIcon>
            <ToolSep $gap={6} />
            <ToolIcon $gap={5}><PlayIcon /></ToolIcon>
            <ToolIcon $gap={6}><AutoRunIcon /></ToolIcon>
            <ToolSep $gap={1} />
            <ToolIcon $gap={6}><HelpIcon /></ToolIcon>
        </Toolbar>

        <TopSplit>
            <InstancePane>
                <PaneBar>
                    <BarLabel>Instance Manager:</BarLabel>
                    <BarButton><ManagerGlyph kind="wand" /></BarButton>
                    <BarButton><ManagerGlyph kind="reset" /></BarButton>
                    <BarButton><ManagerGlyph kind="stop" /></BarButton>
                    <BarButton><ManagerGlyph kind="book" /></BarButton>
                    <YellowStatus>Invalid JTAG configuration</YellowStatus>
                    <CloseSlot><CloseX /></CloseSlot>
                </PaneBar>
                <InstanceTable>
                    <InstHead $first>Instance</InstHead>
                    <InstHead>Status</InstHead>
                    <InstHead>Enabled</InstHead>
                    <InstHead>LEs: 0</InstHead>
                    <InstHead>Memory: 0</InstHead>
                    <InstHead>Small: NA</InstHead>
                    <InstHead>Medium: NA</InstHead>
                    <InstHead>Large: NA</InstHead>
                    <InstCell $indent={23}><InstanceIcon />auto_signaltap_0</InstCell>
                    <InstCell>Not running</InstCell>
                    <InstCell><Check><Tick /></Check></InstCell>
                    <InstCell>0 cells</InstCell>
                    <InstCell>0 bits</InstCell>
                    <InstCell>NA</InstCell>
                </InstanceTable>
            </InstancePane>
            <Splitter />
            <JtagPane>
                <PaneBar>
                    <JtagTitle>JTAG Chain Configuration:</JtagTitle>
                    <RedStatus>No devices detected</RedStatus>
                    <CloseSlot $width={34}><CloseX /></CloseSlot>
                </PaneBar>
                <JtagBody>
                    <JtagRow>
                        <JtagLabel>Hardware:</JtagLabel>
                        <Select $disabled $width={212}><Caret $disabled /></Select>
                        <Button>Setup...</Button>
                    </JtagRow>
                    <JtagRow>
                        <JtagLabel>Device:</JtagLabel>
                        <Select $disabled $width={212} $pad={5}>None Detected<Caret $disabled /></Select>
                        <Button>Scan Chain</Button>
                    </JtagRow>
                    <JtagRow>
                        <span>SOF Manager:</span>
                        <BarButton $after={1}><ManagerGlyph kind="program" /></BarButton>
                        <BarButton $after={0}><ManagerGlyph kind="clip" /></BarButton>
                        <FormInput $muted $width={153} $after={-5} />
                        <Button $width={28}>...</Button>
                    </JtagRow>
                </JtagBody>
            </JtagPane>
        </TopSplit>

        <Band />
        <MainArea>
            <Frame>
                <NodePane>
                    <LockRow>
                        <InstanceName>auto_signaltap_0</InstanceName>
                        <LockLabel>Lock mode:</LockLabel>
                        <LockSelect><LockIcon />Allow all changes</LockSelect>
                    </LockRow>
                    <NodeGrid>
                        <NodeHead $span={3}>Node</NodeHead>
                        <NodeHead>Data Enable</NodeHead>
                        <NodeHead>Trigger Enable</NodeHead>
                        <NodeHead>Trigger Conditions</NodeHead>
                        <NodeHead>Type</NodeHead>
                        <NodeHead>Alias</NodeHead>
                        <NodeHead>Name</NodeHead>
                        <NodeHead>0</NodeHead>
                        <NodeHead>0</NodeHead>
                        <ConditionCell>1<Check $size={14}><Tick /></Check><ConditionSelect>Basic AN<Caret $small /></ConditionSelect></ConditionCell>
                    </NodeGrid>
                    <Hint>Double-click to add nodes</Hint>
                </NodePane>
                <SettingsPane>
                    <SettingsHead><CloseSlot $width={26}><CloseX /></CloseSlot></SettingsHead>
                    <SettingsBody>
                        <SettingsForm>
                            <FormRow $right={-3} $gap={4}>
                                <FormInput $after={2} />
                                <Button $width={16} $height={27}>...</Button>
                            </FormRow>
                            <Rule />
                            <FormRow $top={23}>
                                RAM type:
                                <Select $width={191} $height={27}>Auto<Caret /></Select>
                            </FormRow>
                            <FormRow $top={7}>
                                <Select $disabled $width={300} $height={27}>Multiple segments<Caret $disabled /></Select>
                            </FormRow>
                            <FormRow $top={7} $gap={7}>
                                <Radio />
                                Manual:
                                <Spin>0<SpinArrows><SpinArrow $up /><SpinArrow /></SpinArrows></Spin>
                            </FormRow>
                            <FormRow $top={7}>
                                <Select $width={300} $height={27}><Caret /></Select>
                            </FormRow>
                            <GroupBox><GroupField /></GroupBox>
                        </SettingsForm>
                        <VScroll>
                            <ArrowSlot><ChevronUp /></ArrowSlot>
                            <VThumb />
                            <ArrowSlot><ChevronDown /></ArrowSlot>
                        </VScroll>
                    </SettingsBody>
                    <HScrollBar>
                        <HThumb />
                        <HTrack $width={60}><ChevronRight /></HTrack>
                    </HScrollBar>
                </SettingsPane>
            </Frame>
            <TabRow>
                <Tab $width={81} $pad={11}><HammerIcon />Data</Tab>
                <Tab $active $width={95} $pad={15}><SetupIcon />Setup</Tab>
            </TabRow>
        </MainArea>
        <BottomSplit>
            <LogPane $width={257}>
                <LogBar>
                    Hierarchy Display:
                    <CloseSlot $width={30}><CloseX /></CloseSlot>
                </LogBar>
            </LogPane>
            <LogPane $gap={7}>
                <LogBar>
                    <Check $size={16} />
                    Data Log:
                    <LogIconButton><LogIcon /></LogIconButton>
                    <CloseSlot $width={32}><CloseX /></CloseSlot>
                </LogBar>
                <LogRow><InstanceIcon />auto_signaltap_0</LogRow>
            </LogPane>
        </BottomSplit>
        <FootTabs>
            <FootTab><InstanceIcon />auto_signaltap_0</FootTab>
        </FootTabs>
        <StatusBar>
            <StatusCell $line $pad={5} $width={58}>0%</StatusCell>
            <StatusCell $width={62}>00:00:00</StatusCell>
        </StatusBar>
        <Watermark>https://blog.csdn.net/qq_44853369</Watermark>
        <Grabber $right={3} $bottom={3}><Grip3 /></Grabber>

        <NodeFinder />

        <NoteDot $left={67} $top={372}>1</NoteDot>
        <Note $left={104} $top={364} $width={144} $height={43}>双击添加信号</Note>
    </Page>
);

export default App;
